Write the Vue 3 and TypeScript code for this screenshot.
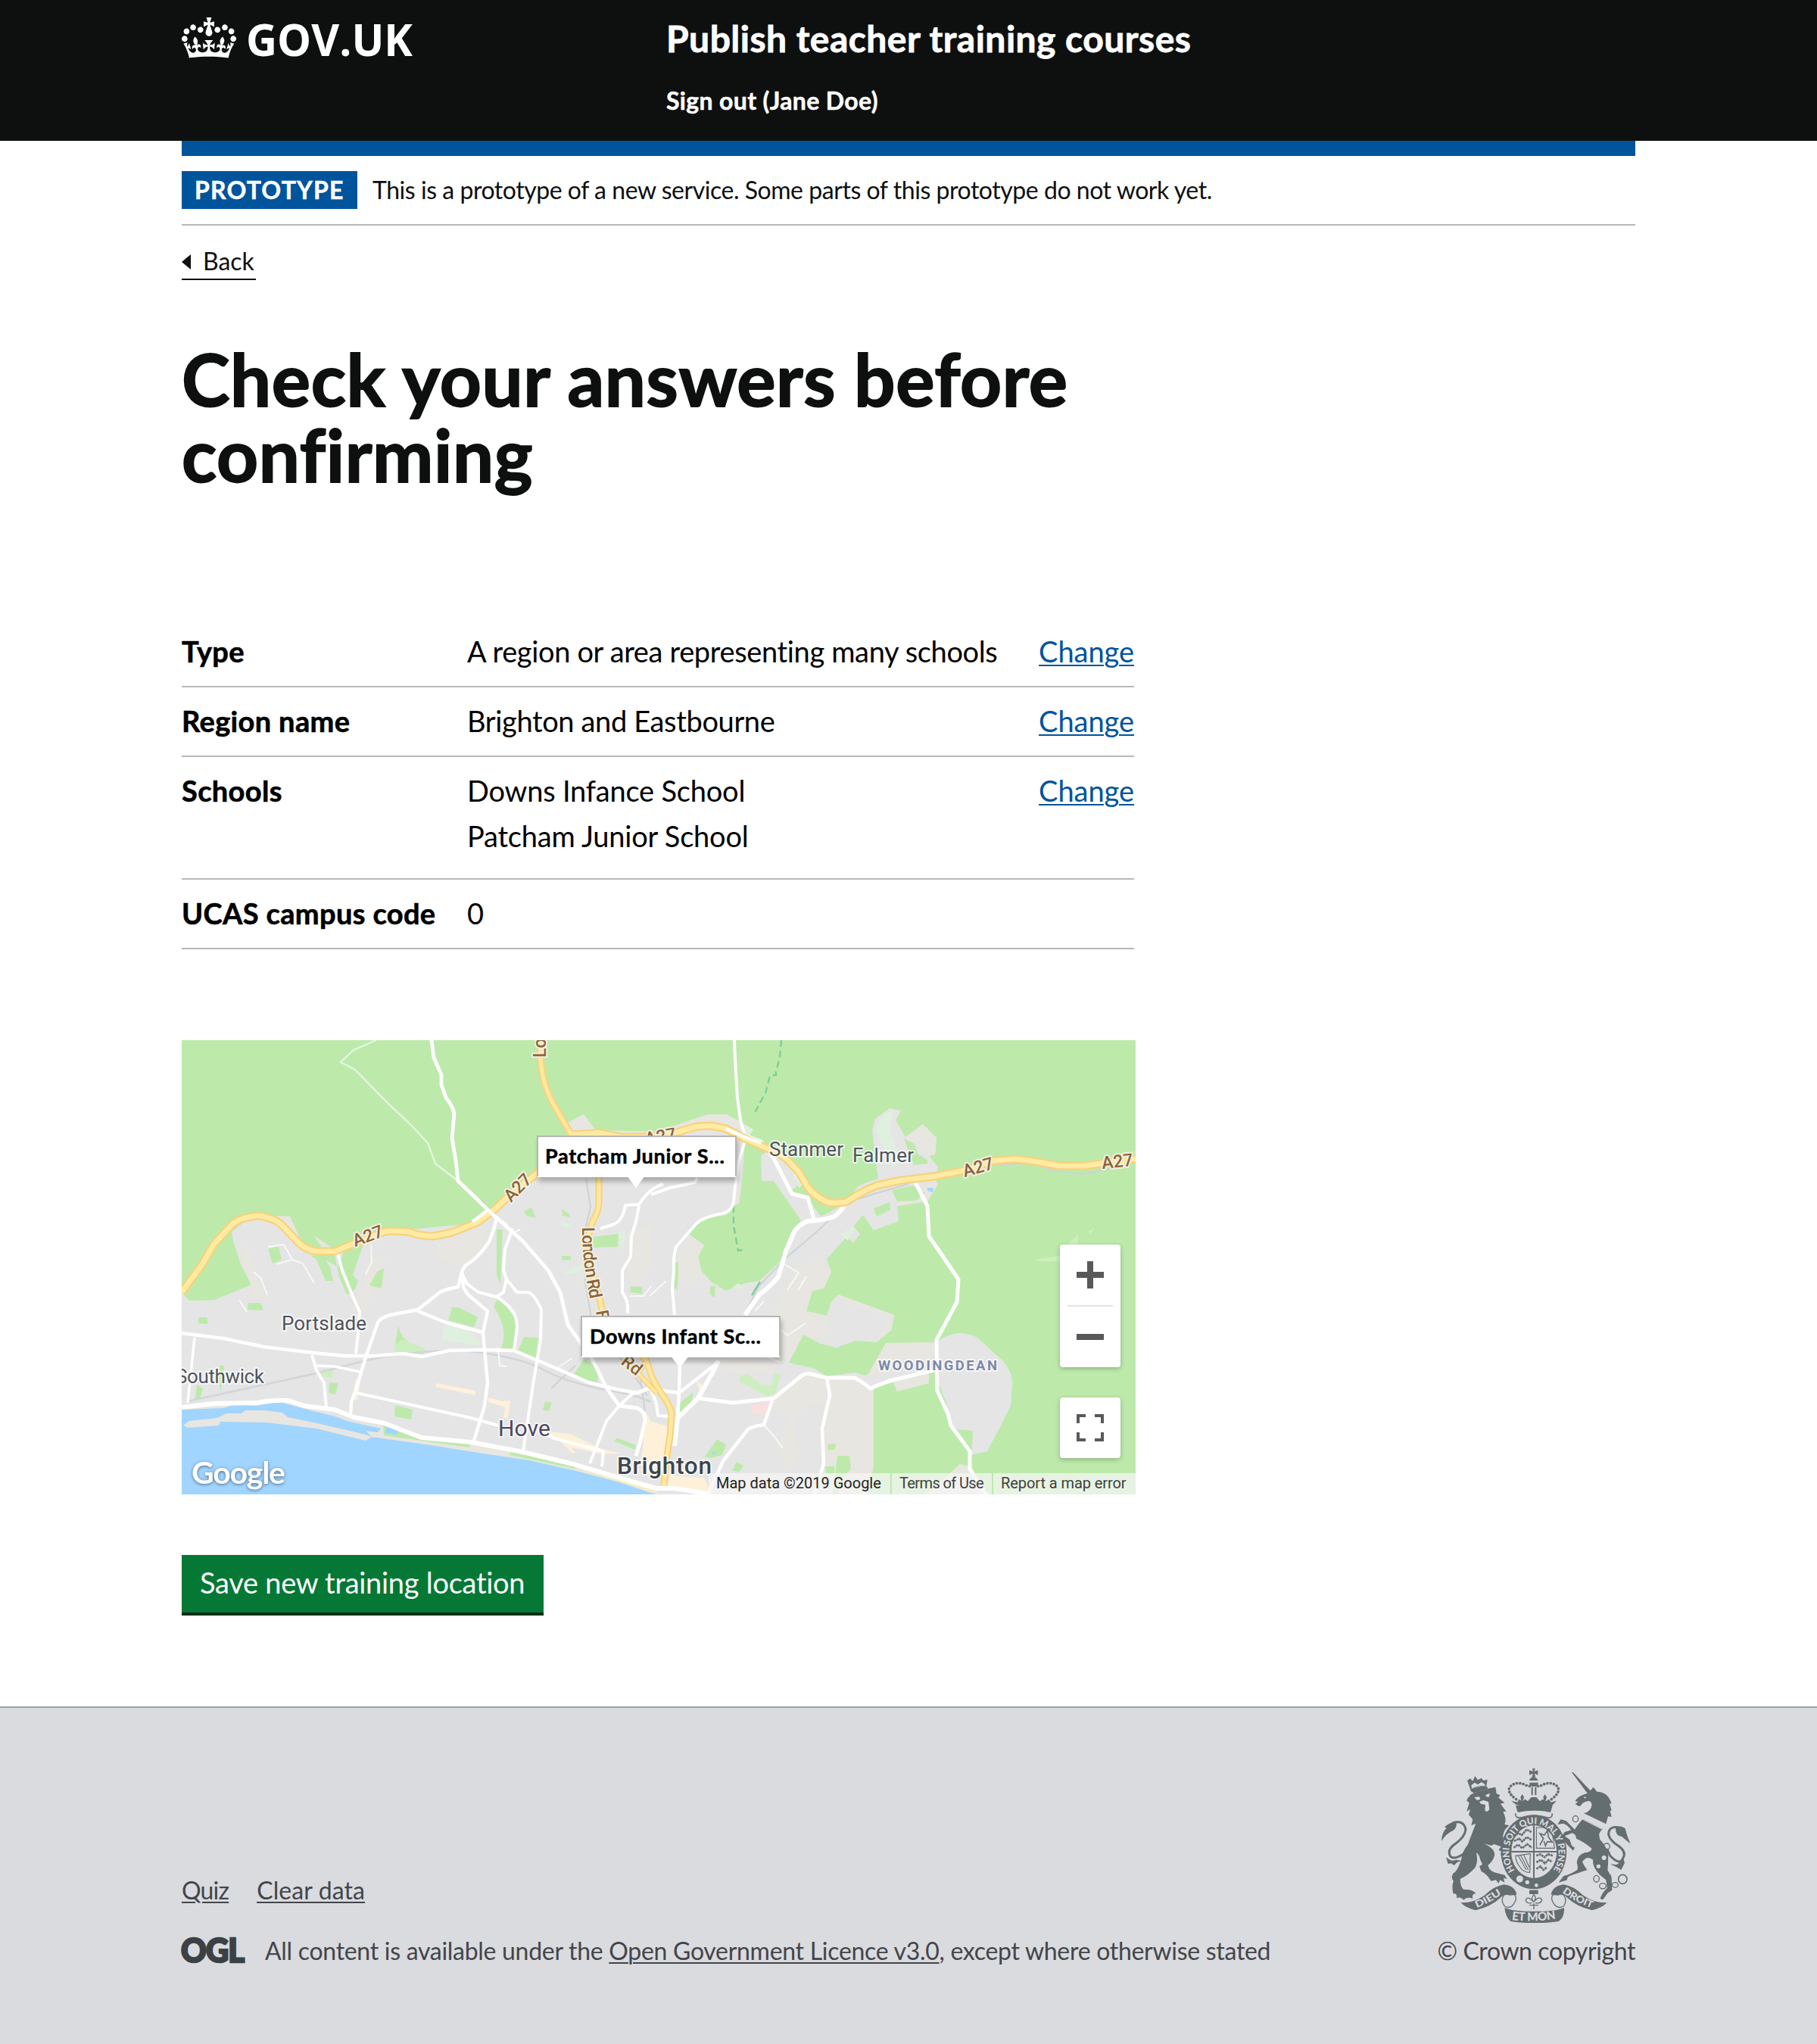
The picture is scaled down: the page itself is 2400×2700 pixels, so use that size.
<script setup lang="ts">
interface SummaryRow {
  key: string
  values: string[]
  change: boolean
}

const rows: SummaryRow[] = [
  { key: 'Type', values: ['A region or area representing many schools'], change: true },
  { key: 'Region name', values: ['Brighton and Eastbourne'], change: true },
  { key: 'Schools', values: ['Downs Infance School', 'Patcham Junior School'], change: true },
  { key: 'UCAS campus code', values: ['0'], change: false },
]

const motorway =
  'M0 333 27 296 43 269 67 243Q78 235 88 234 102 230 112 234 122 236 131 243L153 266Q163 277 178 279L202 279 227 269 255 258Q268 251 280 252L300 253Q315 259 333 259L357 254 390 241 414 223 439 199 467 178Q490 150 520 131L549 122 580 128 620 128 653 122 680 114 700 113 719 117 744 130 773 143Q790 150 798 156L815 174 827 194Q834 204 844 209 852 215 862 215L877 214 893 204Q905 197 918 192L951 185 993 180 1030 173 1055 166Q1066 160 1076 159L1101 157 1126 160 1159 166 1192 166 1221 162 1260 157'
const londonRoad =
  'M473 0 474 26Q476 45 480 59 486 77 496 93L514 124 549 122 551 183 551 216Q550 228 543 239L537 259 541 303 553 345 560 380 600 410 614 423 621 445 628 458 641 478Q647 488 647 496L645 523 641 549 637 588'

const roads: [string, number][] = [
  ['M0 387 55 394 108 405 174 413 214 417 255 417 292 414 317 418 353 410 398 409 439 410 496 434 537 452 574 461 602 466 619 459', 4.6],
  ['M17 393 8 479', 3.5],
  ['M172 416 178 436 188 453 191 486', 4],
  ['M178 430 202 431 235 438', 3.6],
  ['M206 281 212 304 225 336 235 359 233 388 230 414', 4],
  ['M223 496 224 478 231 459 243 419 259 373Q263 366 276 363L312 356 341 333Q352 328 365 326L370 306Q374 296 382 293 396 282 406 266 414 248 416 233', 4.4],
  ['M437 249 427 276 425 304 429 316 425 333 416 339', 4],
  ['M370 308 377 322 392 333 416 339Q430 348 437 358 443 366 443 380L439 409', 4],
  ['M429 316Q434 322 443 333L458 333Q467 337 475 356L474 396 465 449 455 516 451 543', 4],
  ['M330 0 333 23 343 46 343 59 349 76Q358 87 360 97L357 129 362 159 365 186 414 233 451 266 484 304 500 333 510 376 541 419 561 459 578 483 602 486Q612 491 612 502L606 529 600 549', 4.8],
  ['M370 306 372 326 378 336 404 358 398 386 404 453 400 483 386 529', 4.4],
  ['M312 358 349 373 398 386', 4.4],
  ['M231 466 300 481 382 499 418 509', 4],
  ['M474 516 492 526 557 543 555 563', 4],
  ['M578 483 561 503 551 529 539 559', 4],
  ['M578 483 594 468 619 459 627 480 629 496 647 497', 4],
  ['M0 485 43 480 100 479Q122 475 141 476L162 483 202 488 227 498 268 506 288 514 317 525 382 531 451 544 521 561 578 578 627 592 650 592 700 600', 6],
  ['M730 0 731 25 734 76 738 106 744 126', 4],
  ['M744 133 736 159 731 193 729 213Q727 226 715 229 690 233 680 242L653 273Q649 285 650 304L648 329 651 363', 4],
  ['M620 204 645 195 678 188 681 182', 4],
  ['M636 190Q617 196 604 217L586 218Q583 238 571 243L553 249', 4],
  ['M604 219 600 240 594 259 593 286 582 304 582 333Q591 345 589 361', 4],
  ['M719 116 744 126 765 134 782 156 806 203 827 208 835 236', 5],
  ['M877 216Q868 230 860 234 845 238 827 239 815 244 809 253L798 279 788 313Q776 327 763 336L744 363', 6],
  ['M709 423 703 436 682 473 655 499 651 536', 6],
  ['M709 425 657 466Q638 464 620 459', 4.5],
  ['M658 425 657 466 655 499', 4.5],
  ['M968 186 985 219 987 259 1018 304 1026 316 1024 346 997 396 998 463 1012 493 1016 509 1041 543 1041 566 1065 604', 5],
  ['M682 473 728 479 782 473 819 443Q826 439 831 441L852 446 889 446Q900 452 910 460 920 455 939 449L993 436', 5],
  ['M852 446 856 469 846 513 848 559 836 600', 4.5],
  ['M780 476 769 508Q754 510 748 514L715 556 695 600', 4.5],
]
const lanes =
  'M114 273 135 270 146 290 125 296M146 290 160 295 175 321M95 306 105 315 113 337M76 343 86 359M250 270 251 293 243 309M769 508 783 524 794 539M618 338 640 318M790 425 770 417M796 296 815 307 800 330M825 312 814 331M792 383 800 390 824 374M769 345 757 358M418 405 420 430 430 431M497 432 516 420M592 338 610 338 620 325M437 255 447 250'

const urban =
  'M66 253 88 236 120 232 143 233 156 262 174 280 190 318 200 318 196 300 188 288 202 279 255 258 300 250 390 242 382 238 414 222 440 200 472 180 500 150 512 124 510 109 531 98 547 119 630 121 657 111 695 98 719 98 740 109 755 118 748 129 744 133 740 186 736 216 728 219 719 228 682 239 670 256 690 271 682 286 686 304 699 319 719 331 744 321 763 318 786 297 802 280 806 255 818 238 782 186 766 186 765 153 777 143 798 156 819 186 806 199 827 209 844 233 877 216 893 193 910 186 920 183 912 119 916 104 935 90 950 93 943 106 956 128 979 111 997 129 995 151 987 153 999 168 993 193 985 213 945 219 947 239 914 251 900 231 887 246 896 256 887 268 879 259 852 289 858 306 848 328 833 331 825 358 852 364 858 346 867 336 941 363 937 383 918 399 890 397 865 406 844 401 821 389 802 426 836 434 852 444 889 439 902 443 997 399Q1012 388 1026 387 1042 388 1051 393L1084 423Q1098 440 1097 453L1095 483 1080 513 1064 543 1043 548 1045 516 1018 514 1010 479 1001 456 997 439 987 439 987 453 945 464 939 449 914 459 914 563 906 600 0 600 0 333 10 344 43 343 92 323 78 296 71 280Z'
</script>

<template>
  <div class="page">
    <header class="header">
      <div class="container header-row">
        <a class="logo">
          <svg class="crown" viewBox="0 0 132 97" preserveAspectRatio="none">
            <path fill="#fff" fill-rule="evenodd" d="M25 30.2c3.5 1.5 7.7-.2 9.1-3.7 1.5-3.6-.2-7.8-3.9-9.2-3.6-1.4-7.6.3-9.1 3.9-1.4 3.5.3 7.5 3.9 9zM9 39.5c3.6 1.5 7.8-.2 9.2-3.7 1.5-3.6-.2-7.8-3.9-9.1-3.6-1.5-7.6.2-9.1 3.8-1.4 3.5.3 7.5 3.8 9zM4.4 57.2c3.5 1.5 7.7-.2 9.1-3.8 1.5-3.6-.2-7.7-3.9-9.1-3.5-1.5-7.6.3-9.1 3.8-1.4 3.5.3 7.6 3.9 9.1zm38.3-21.4c3.5 1.5 7.7-.2 9.1-3.8 1.5-3.6-.2-7.7-3.9-9.1-3.6-1.5-7.6.3-9.1 3.8-1.3 3.6.4 7.7 3.9 9.1zm64.4-5.6c-3.6 1.5-7.8-.2-9.1-3.7-1.5-3.6.2-7.8 3.8-9.2 3.6-1.4 7.7.3 9.2 3.9 1.3 3.5-.4 7.5-3.9 9zm15.9 9.3c-3.6 1.5-7.7-.2-9.1-3.7-1.5-3.6.2-7.8 3.7-9.1 3.6-1.5 7.7.2 9.2 3.8 1.5 3.5-.3 7.5-3.8 9zm4.7 17.7c-3.6 1.5-7.8-.2-9.2-3.8-1.5-3.6.2-7.7 3.9-9.1 3.6-1.5 7.7.3 9.2 3.8 1.3 3.5-.4 7.6-3.9 9.1zM89.3 35.8c-3.6 1.5-7.8-.2-9.2-3.8-1.4-3.6.2-7.7 3.9-9.1 3.6-1.5 7.7.3 9.2 3.8 1.4 3.6-.3 7.7-3.9 9.1zM69.7 17.7l8.9 4.7V9.3l-8.9 2.8c-.2-.3-.5-.6-.9-.9L72.4 0H59.6l3.5 11.2c-.3.3-.6.5-.9.9l-8.8-2.8v13.1l8.8-4.7c.3.3.6.7.9.9l-5 15.4v.1c-.2.8-.4 1.6-.4 2.4 0 4.1 3.1 7.5 7 8.1h.2c.3 0 .7.1 1 .1.4 0 .7 0 1-.1h.2c4-.6 7.1-4.1 7.1-8.1 0-.8-.1-1.7-.4-2.4V34l-5.1-15.4c.4-.2.7-.6 1-.9zM66 92.8c16.9 0 32.8 1.1 47.1 3.2 4-16.9 8.9-26.7 14-33.5l-9.6-3.4c1 4.9 1.1 7.2 0 10.2-1.5-1.4-3-4.3-4.2-8.7L108.6 76c2.8-2 5-3.2 7.5-3.3-4.4 9.4-10 11.9-13.6 11.2-4.3-.8-6.3-4.6-5.6-7.9 1-4.7 5.7-5.9 8-.5 4.3-8.7-3-11.4-7.6-8.8 7.1-7.2 7.9-13.5 2.1-21.1-8 6.1-8.1 12.3-4.5 20.8-4.7-5.4-12.1-2.5-9.5 6.2 3.4-5.2 7.9-2 7.2 3.1-.6 4.3-6.4 7.8-13.5 7.2-10.3-.9-10.9-8-11.2-13.8 2.5-.5 7.1 1.8 11 7.3L80.2 60c-4.1 4.4-8 5.3-12.3 5.4 1.4-4.4 8-11.6 8-11.6H55.5s6.4 7.2 7.9 11.6c-4.2-.1-8-1-12.3-5.4l1.4 16.4c3.9-5.5 8.5-7.7 10.9-7.3-.3 5.8-.9 12.8-11.1 13.8-7.2.6-12.9-2.9-13.5-7.2-.7-5 3.8-8.3 7.1-3.1 2.7-8.7-4.6-11.6-9.4-6.2 3.7-8.5 3.6-14.7-4.6-20.8-5.8 7.6-5 13.9 2.2 21.1-4.7-2.6-11.9.1-7.7 8.8 2.3-5.5 7.1-4.2 8.1.5.7 3.3-1.3 7.1-5.7 7.9-3.5.7-9-1.8-13.5-11.2 2.5.1 4.7 1.3 7.5 3.3l-4.7-15.4c-1.2 4.4-2.7 7.2-4.3 8.7-1.1-3-.9-5.3 0-10.2l-9.5 3.4c5 6.9 9.9 16.7 14 33.5 14.8-2.1 30.8-3.2 47.7-3.2z" />
          </svg>
          <svg class="wordmark" viewBox="0 0 230 84">
            <text x="0" y="51" font-size="59" textLength="220" lengthAdjust="spacingAndGlyphs">GOV.UK</text>
          </svg>
        </a>
        <div class="header-content">
          <a class="service">Publish teacher training courses</a>
          <a class="sign-out">Sign out (Jane Doe)</a>
        </div>
      </div>
    </header>

    <div class="container">
      <div class="blue-bar"></div>
      <div class="phase">
        <strong class="tag">PROTOTYPE</strong>
        <span class="phase-text">This is a prototype of a new service. Some parts of this prototype do not work yet.</span>
      </div>
      <a class="back">
        <svg width="12" height="20" viewBox="0 0 12 20"><path d="M0 10 12 0V20Z" fill="#0e100f" /></svg>
        <span>Back</span>
      </a>

      <main class="main">
        <h1>Check your answers before confirming</h1>

        <dl class="summary">
          <div v-for="row in rows" :key="row.key" class="row">
            <dt>{{ row.key }}</dt>
            <dd class="value">
              <p v-for="v in row.values" :key="v">{{ v }}</p>
            </dd>
            <dd v-if="row.change" class="action"><a>Change</a></dd>
          </div>
        </dl>

        <div class="map">
          <svg class="map-canvas" viewBox="0 0 1260 600">
            <defs>
              <path id="ldn" d="M529 247Q529 300 544 362" />
            </defs>
            <rect width="1260" height="600" fill="#bdeaab" />
            <path :d="urban" fill="#e5e5e5" />
            <g fill="#e8e6e0">
              <path d="M120 232 143 233 156 262 150 262 135 240ZM174 258 200 275 190 280ZM510 109 531 98 547 119 520 128ZM547 119 630 121 650 124 600 128ZM657 111 695 98 719 98 740 109 755 118 746 126 720 112 695 108 655 120ZM740 160 739 186 736 216 727 216 730 180ZM979 111 997 129 995 151 987 153 975 140 956 128ZM993 180 999 190 985 213 945 219 947 213 975 206ZM670 256 690 271 682 286 690 318 660 320 655 290ZM858 306 848 328 833 331 825 358 852 364 860 385 844 395 821 389 802 426 790 424 770 380 790 340 810 300 840 290ZM867 336 941 363 937 383 918 399 935 365 880 350ZM850 450 889 446 914 459 914 563 906 600 836 600 850 560 848 513 858 469ZM790 460 831 441 850 450 850 480 830 480 810 500 815 550 800 570 790 530 800 500 775 480ZM939 449 987 439 987 453 945 464ZM382 240 414 224 405 240ZM350 265 400 250 395 285 365 300 330 280ZM85 265 100 320 115 345 95 340 75 300ZM250 290 270 285 250 330 245 360 228 350 240 320ZM700 420 790 425 780 440 720 440ZM930 400 997 399 985 420 940 430 905 444ZM590 250 620 245 620 300 595 330 590 300Z" />
              <path d="M1018 569 1028 560 1042 563 1065 604 978 604Z" />
            </g>
            <g fill="#bdeaab">
              <path d="M0 333 10 344 43 343 92 323 78 296 64 253 40 270ZM170 285 202 281 207 310 218 336 228 331 233 318 226 310 240 270 215 276 206 300 190 290 200 318 190 318 178 290ZM114 276 128 272 132 290 120 295ZM88 347 104 347 108 357 87 356ZM22 366 34 366 34 375 22 374ZM258 306 267 301 264 328 248 324ZM452 226 462 221 468 235 456 232ZM502 223 512 230 513 234 503 232ZM541 260 577 256 576 273 542 274ZM502 285 514 285 514 291 502 290ZM416 250 424 250 421 323 416 310ZM357 353 366 353 391 366 386 379 352 370ZM417 342Q443 360 444 385L437 408 422 407Q432 380 412 352ZM286 376Q290 395 302 400L321 408 321 414 290 410 281 412ZM452 392 471 393 468 420 444 411ZM532 421 551 434 549 453 516 444ZM195 452 207 453 203 468 194 466ZM282 482 305 488 303 501 281 497ZM480 477 489 479 485 490 477 488ZM574 525 600 535 599 541 572 530ZM593 325 608 326 608 335 592 333ZM654 482 676 465 672 484 655 497ZM707 527 719 534 714 548 700 552 691 550ZM733 557 742 562 736 571 727 568ZM853 534 864 533 863 541 853 541ZM866 549 882 549 884 566 872 580 866 600 860 600ZM850 563 862 563 862 572 851 572ZM954 130 968 137 972 150 985 158 985 163 967 165ZM938 198 965 192 982 202 970 212 945 213ZM914 222 935 214 936 224 918 233ZM698 325 705 325 704 340 698 336ZM650 295 656 293 655 330 650 325ZM50 430 56 430 52 462 50 460ZM20 455 28 460 24 474 18 474ZM1018 514 1045 516 1043 546Z" />
            </g>
            <g fill="#cdefbf">
              <path d="M738 443 748 441 765 455 780 456 782 440 791 441 784 467 772 470 736 450ZM185 435 200 434 199 446 185 444ZM281 405 290 395 320 408 322 415 281 413Z" />
              <path fill="#dff0df" d="M346 377 370 377 395 398 394 404 344 396ZM333 264 342 270 339 274ZM502 240 517 243 514 248 502 246ZM500 308 530 296 530 304 510 310ZM577 254 586 252 583 278 578 270ZM916 120 925 100 940 92 935 120 950 160 940 168ZM727 327 735 321 743 328ZM798 152 812 180 822 190 815 195ZM740 110 755 118 748 129ZM869 256 890 246 880 265Z" />
              <path d="M1126 290 1160 285 1170 270 1184 257 1184 270 1165 292 1135 292ZM1198 252 1206 248 1200 257Z" />
            </g>
            <g fill="#fef0d9">
              <path d="M336 453 388 463 388 469 336 458ZM405 472 424 477 434 476 431 499 425 499 427 485 405 478ZM230 447 236 450 232 475 225 475ZM480 517 513 520 555 540 582 546 555 547 515 538 520 545 516 546 500 530ZM610 486 618 500 618 503 643 510 640 560 624 580 606 560 610 530ZM645 575 690 578 700 598 640 592ZM680 450 688 456 690 470 684 464Z" />
              <path fill="#f9dfdd" d="M755 480 778 478 772 496 752 492Z" />
            </g>
            <path fill="#e8e6e0" d="M0 512 0 600 627 600 600 580 500 552 451 545 382 533 310 525 280 515 218 503 160 486 133 481 100 481 45 482 0 487Z" />
            <path fill="#bdeaab" d="M266 508 290 518 320 527 381 533 380 538 267 522ZM434 544 521 562 519 566 433 548Z" />
            <path fill="#f9efc0" d="M528 562 627 592 629 598 600 590 530 568Z" />
            <g fill="#a0d5ff">
              <path d="M0 488 55 486 72 481 97 483 129 478 170 489 203 497 218 503 263 513 259 518 243 516 251 524 243 521 205 512 165 503 140 498 133 492 110 489 84 489 79 493 59 493 47 499 10 503 2 509 8 512 49 509 51 504 112 505 178 513 243 529 251 524 329 535 398 546 459 555 521 569 578 584 619 598 627 600 0 600Z" />
              <path d="M270 510 286 514 285 521 269 519ZM984 195 993 195 992 201 986 199ZM700 544 705 543 703 548Z" />
            </g>
            <path d="M8 477 178 440 235 425Q300 410 360 410 420 412 470 431 500 450 560 462 600 468 620 478" fill="none" stroke="#d2d5d9" stroke-width="2.6" />
            <path d="M534 183 540 220 533 250 533 320 545 390 590 430 615 470M488 460 520 430M800 286 840 252 880 214 918 202 960 190M745 360 762 325 800 286M1076 165 1120 162 1150 172 1190 177 1225 170M585 425 605 440 612 490" fill="none" stroke="#cfd1d8" stroke-width="2" />
            <path d="M753 337 764 319" stroke="#82cf9b" stroke-width="2.4" fill="none" />
            <path d="M792 0 790 22 785 42 785 46 777 47 771 70 763 84 756 98M729 219 729 245 735 278 742 277" fill="none" stroke="#7fcf95" stroke-width="2.4" stroke-dasharray="9 5" />
            <path d="M395 212 405 222" stroke="#7fcf95" stroke-width="2.4" />
            <path d="M257 0 227 13 210 29 229 39 272 83 304 113 325 136 335 163 365 186" fill="none" stroke="#e3f6da" stroke-width="2.4" />
            <path :d="lanes" fill="none" stroke="#f7f9f4" stroke-width="2" />
            <path v-for="(r, i) in roads" :key="i" :d="r[0]" fill="none" stroke="#fff" :stroke-width="r[1]" stroke-linejoin="round" />
            <g fill="none" stroke-linejoin="round">
              <path :d="londonRoad" stroke="#f8d27c" stroke-width="9" />
              <path d="M614 423 603 440 627 466" stroke="#f8d27c" stroke-width="7" />
              <path :d="motorway" stroke="#f8d27c" stroke-width="11" />
              <path :d="londonRoad" stroke="#ffe9a0" stroke-width="5" />
              <path d="M614 423 603 440 627 466" stroke="#ffe9a0" stroke-width="3.4" />
              <path :d="motorway" stroke="#ffeba3" stroke-width="6.6" />
            </g>
            <path d="M365 186 414 233 430 245M719 117 744 128 765 136M384 240 405 224" stroke="#fff" stroke-width="4.4" fill="none" />

            <g class="place">
              <text x="776" y="153" font-size="26" textLength="98">Stanmer</text>
              <text x="886" y="161" font-size="26" textLength="81">Falmer</text>
              <text x="132" y="383" font-size="26" textLength="112">Portslade</text>
              <text x="-8" y="453" font-size="26" textLength="117">Southwick</text>
              <text x="418" y="523" font-size="30" textLength="69" class="hove">Hove</text>
              <text x="575" y="573" font-size="31.5" textLength="125" class="city">Brighton</text>
              <text x="920" y="436" font-size="18.5" textLength="157" class="suburb">WOODINGDEAN</text>
            </g>
            <g class="road-name">
              <text transform="translate(229 273) rotate(-20)">A27</text>
              <text transform="translate(435 215) rotate(-46)">A27</text>
              <text transform="translate(613 138) rotate(-9)">A27</text>
              <text transform="translate(1034 181) rotate(-16)">A27</text>
              <text transform="translate(1216 170) rotate(-6)">A27</text>
              <text transform="translate(481 23) rotate(-90)">Lo</text>
              <text transform="translate(547 358) rotate(80)">F</text>
              <text transform="translate(579 427) rotate(38)">Rd</text>
              <text><textPath href="#ldn" textLength="96">London Rd</textPath></text>
            </g>
            <text x="13" y="586" class="google" textLength="124">Google</text>
          </svg>

          <div class="pin pin-patcham">Patcham Junior S...</div>
          <div class="pin pin-downs">Downs Infant Sc...</div>

          <div class="zoom">
            <svg width="80" height="80" viewBox="0 0 80 80"><path d="M22 36H36V22H44V36H58V44H44V58H36V44H22Z" fill="#595959" /></svg>
            <i></i>
            <svg width="80" height="80" viewBox="0 0 80 80"><path d="M22 36H58V44H22Z" fill="#595959" /></svg>
          </div>
          <div class="fullscreen">
            <svg width="80" height="80" viewBox="0 0 80 80" fill="none" stroke="#595959" stroke-width="4"><path d="M24 34V24H34M46 24H56V34M56 46V56H46M34 56H24V46" /></svg>
          </div>
          <div class="attribution">
            <span class="data">Map data ©2019 Google</span>
            <span class="terms">Terms of Use</span>
            <span class="report">Report a map error</span>
          </div>
        </div>

        <button class="button">Save new training location</button>
      </main>
    </div>

    <footer class="footer">
      <div class="container footer-row">
        <div class="footer-meta">
          <nav><a class="quiz">Quiz</a><a>Clear data</a></nav>
          <div class="licence">
            <svg class="ogl" viewBox="0 0 82 36"><text x="-1" y="33" font-size="44" textLength="83" lengthAdjust="spacingAndGlyphs">OGL</text></svg>
            <span>All content is available under the <a>Open Government Licence v3.0</a>, except where otherwise stated</span>
          </div>
        </div>
        <div class="copyright">
          <svg class="crest" viewBox="72 78 750 612" preserveAspectRatio="none">
            <defs>
              <path id="garter" d="M365 485A98 112 0 1 1 511 485" />
              <path id="left-scroll" d="M210 631Q262 612 322 568" />
              <path id="mid-scroll" d="M346 677Q440 690 534 672" />
              <path id="right-scroll" d="M549 568Q600 608 680 636" />
            </defs>
            <g fill="#646d70">
              <!-- lion -->
              <path d="M186 166Q215 148 252 149L256 158 200 176ZM174 126 186 118 196 128 205 108 216 124 230 116 238 126 254 122 250 148Q215 148 188 166Z" />
              <path d="M176 196 190 180Q240 160 286 152L290 178 304 184 298 194 322 214 306 218 328 248 316 250Q332 280 322 300L340 304Q308 330 318 362 345 376 350 396L345 430 335 440 330 428 318 436 320 418 306 422 310 406 298 402 308 388 280 378 270 384 240 376Q286 396 282 424 276 446 256 462 262 486 290 492L322 500 332 516 318 512 322 530 304 520 298 534 288 520 268 524Q252 496 230 486L222 466 234 458 226 440Q222 420 210 412 218 446 206 470 180 500 146 516 146 546 160 558 196 556 208 574 190 574 196 594 172 584 160 600 148 584 132 592 136 572 118 574 112 540 120 524 108 512 118 494Q134 488 150 440 154 406 176 380L208 296 190 304 196 280 180 262 186 240 172 248 182 214 172 206Z" />
              <path d="M72 366Q74 330 92 314L84 310Q110 288 130 290 136 310 118 324 90 336 72 366Z" />
              <path d="M90 430 106 440Q112 446 130 440L152 444 134 450 122 462 110 454 98 456Z" />
              <!-- unicorn -->
              <path d="M588 94 594 94 662 166 674 152 688 170Q730 170 746 216L738 218 746 244 740 246 746 270 732 268 724 298 636 256Q664 250 668 222 664 204 650 208 630 212 622 228L612 226 602 218 614 210 602 208Q610 190 634 182L650 176Z" />
              <path d="M634 276 712 318Q690 330 700 360 720 380 732 410 734 450 730 480L746 510 748 560 730 572 712 598 700 594 712 570 728 552 724 520 700 500Q670 470 672 440 650 420 630 448 640 470 650 480L590 500Q566 506 570 520L536 530 556 504Q580 500 610 480 614 470 608 450 612 420 640 412 664 410 668 396 640 370 606 356 606 340 590 334L560 346 580 360 588 384 600 392 594 404 570 380 548 348 560 330 586 322 572 306 556 296 532 300 544 280 566 286 600 320Q612 300 634 276Z" />
              <path d="M820 376 786 348Q760 344 762 314 780 300 800 316 806 344 820 376Z" />
              <path d="M740 456 764 460Q780 454 790 430L798 452 784 480 768 470Z" />
              <path d="M724 494 744 500 742 540 730 530Z" />
              <!-- garter ring and royal crown -->
              <path fill-rule="evenodd" d="M438 262A130 147 0 1 1 437 262ZM438 304A90 104 0 1 0 439 304Z" />
              <path d="M366 226Q438 206 512 226L504 252Q438 238 374 252ZM368 222 348 206 372 212 380 200 392 208 404 200 414 208 428 192H448L462 208 474 200 486 208 498 200 506 212 528 206 510 226Z" />
              <path d="M432 78H443L440 90 454 85V104L440 98 445 112H430L435 98 420 104V85L435 90ZM420 126Q422 114 436 112 452 114 454 126ZM420 134H456Q454 150 438 150 422 150 420 134ZM428 152H434V184H428ZM442 152H448V184H442Z" />
              <path d="M392 180 399 192 395 206H389L385 192ZM482 180 489 192 485 206H479L475 192Z" />
              <path d="M404 200 412 210 424 204 418 222H404ZM472 200 464 210 452 204 458 222H472Z" />
              <!-- motto scroll -->
              <path d="M148 610Q200 612 244 580 280 544 320 538 364 544 370 578L340 580Q320 576 306 590 270 624 208 640 170 632 148 610Z" />
              <path d="M728 610Q676 612 632 580 596 544 556 538 512 544 506 578L536 580Q556 576 570 590 606 624 668 640 706 632 728 610Z" />
              <path d="M322 630Q350 642 400 644H480Q530 642 558 630 560 668 536 684 440 698 346 684 326 668 322 630Z" />
              <path d="M420 560H455V576H420Z" />
            </g>
            <g fill="none" stroke="#646d70">
              <path d="M116 294Q160 280 168 320 164 350 130 374 96 396 104 420 114 446 160 416L176 392" stroke-width="9" />
              <path d="M776 312Q734 304 734 340 740 364 772 384 806 408 792 432 780 466 740 424L728 396" stroke-width="9" />
              <path d="M368 200Q326 170 346 148 372 126 410 146L430 150M508 200Q548 170 530 148 504 126 466 146L446 150" stroke-width="11" stroke-dasharray="0.1 13" stroke-linecap="round" />
              <path d="M366 256Q362 278 392 272 438 258 486 272 514 278 510 256" stroke-width="5" />
              <path d="M320 580Q304 600 322 624 350 640 366 600 372 570 340 580M556 580Q572 600 556 624 526 640 510 600 504 570 536 580" stroke-width="4" />
              <path d="M438 304V512M348 408H530" stroke-width="6" />
              <path d="M448 312H490L512 340 520 394H448ZM366 424 424 416 422 490Q396 490 384 470 366 450 366 424ZM376 424 408 480M386 422 416 480M398 420 420 470" stroke-width="3.4" />
              <path d="M362 346 376 334 390 342 410 320 428 330M360 366 380 356 392 368 410 350 430 362M358 392 376 380 392 394 412 378 430 392M448 424 464 418 480 430 494 418 514 424M448 450 466 440 482 454 496 440 510 448M448 476 464 466 476 480 490 470" stroke-width="8" stroke-dasharray="9 2" />
              <path d="M462 382 476 356 462 336 480 342 492 324 496 350 510 370 492 368 484 384 478 366" stroke-width="5" />
              <path d="M438 578Q424 594 436 606 452 594 438 578ZM436 606Q412 580 406 600 410 616 430 610M438 606Q462 580 470 600 464 616 444 610M420 620H456M438 612V636" stroke-width="4" />
              <ellipse cx="790" cy="517" rx="17" ry="18" stroke-width="5" />
              <ellipse cx="760" cy="540" rx="12" ry="10" stroke-width="4" />
              <ellipse cx="711" cy="544" rx="13" ry="11" stroke-width="4" />
              <ellipse cx="686" cy="515" rx="11" ry="13" stroke-width="4" />
              <ellipse cx="727" cy="387" rx="12" ry="12" stroke-width="4" />
              <ellipse cx="603" cy="278" rx="11" ry="12" stroke-width="4" />
            </g>
            <g fill="#dadbdf">
              <path d="M202 192 222 190 226 200 212 204ZM246 184 264 176 260 192 250 190ZM222 210 238 204 258 210 262 240Q252 256 244 244L246 222 228 218Z" />
              <circle cx="716" cy="432" r="9" /><circle cx="694" cy="466" r="8" /><circle cx="592" cy="362" r="9" /><circle cx="412" cy="529" r="8" /><circle cx="448" cy="541" r="7" />
              <path d="M634 192 646 190 642 198ZM626 256 640 262 650 280 662 272 670 290 684 284 690 300 702 296 706 308 714 306 708 320 628 280Z" opacity=".85" />
              <path d="M190 144 204 134 216 142 230 132 244 140 244 146Q214 146 192 158Z" />
            </g>
            <circle cx="382" cy="516" r="17" fill="#dadbdf" stroke="#646d70" stroke-width="7" />
            <g class="crest-text">
              <text font-size="36"><textPath href="#garter" startOffset="4" textLength="480" lengthAdjust="spacingAndGlyphs">HONI SOIT QUI MAL Y PENSE</textPath></text>
              <text font-size="38"><textPath href="#left-scroll" startOffset="2" textLength="112" lengthAdjust="spacingAndGlyphs">DIEU</textPath></text>
              <text font-size="46"><textPath href="#mid-scroll" startOffset="4" textLength="176" lengthAdjust="spacingAndGlyphs">ET MON</textPath></text>
              <text font-size="38"><textPath href="#right-scroll" startOffset="2" textLength="132" lengthAdjust="spacingAndGlyphs">DROIT</textPath></text>
            </g>
          </svg>
          <span>© Crown copyright</span>
        </div>
      </div>
    </footer>
  </div>
</template>

<style>
body { background: #fff; }
</style>

<style scoped>
.page {
  width: 2400px;
  height: 2700px;
  display: flex;
  flex-direction: column;
  font-family: Lato, "Open Sans", sans-serif;
  color: #0e100f;
  overflow: hidden;
}
.container { width: 1920px; margin: 0 auto; }
p, dl, dd, h1 { margin: 0; }

.header { height: 186px; background: #0e100f; color: #fff; }
.header-row { display: flex; }
.logo { display: flex; width: 640px; height: 110px; }
.crown { width: 72px; height: 54px; margin-top: 23px; }
.wordmark { width: 230px; height: 84px; margin: 23px 0 0 13px; }
.wordmark text { font-family: "Open Sans", sans-serif; font-weight: 700; fill: #fff; }
.header-content { display: flex; flex-direction: column; padding-top: 21px; font-weight: 700; }
.service { font-size: 48px; line-height: 60px; letter-spacing: 0.47px; -webkit-text-stroke: 0.8px; }
.sign-out { margin-top: 32px; font-size: 32px; line-height: 40px; letter-spacing: 0.35px; -webkit-text-stroke: 0.5px; }

.blue-bar { height: 20px; background: #00549c; }
.phase { display: flex; padding: 20px 0; border-bottom: 2px solid #b8b8b8; height: 50px; }
.tag {
  box-sizing: border-box;
  width: 232px;
  height: 50px;
  padding-left: 17px;
  background: #00549c;
  color: #fff;
  font-size: 32px;
  font-weight: 700;
  letter-spacing: 1.2px;
  line-height: 50px;
  -webkit-text-stroke: 0.5px;
}
.phase-text { margin-left: 20px; font-size: 32px; line-height: 50px; letter-spacing: -0.46px; white-space: nowrap; }

.back {
  display: flex;
  width: 98px;
  height: 44px;
  margin-top: 26px;
  border-bottom: 2px solid #0e100f;
  font-size: 32px;
  line-height: 42px;
}
.back svg { margin: 12px 16px 0 0; }

.main { width: 1260px; }
h1 { margin-top: 80px; font-size: 96px; line-height: 100px; font-weight: 700; letter-spacing: 0.6px; -webkit-text-stroke: 1.8px; }

.summary { width: 1258px; margin-top: 166px; font-size: 38px; line-height: 50px; color: #000; }
.row { display: flex; padding: 19px 0 21px; border-bottom: 2px solid #b8b8b8; }
dt { width: 377px; font-weight: 700; letter-spacing: 0.35px; -webkit-text-stroke: 0.6px; }
.value { flex: 1; letter-spacing: -0.36px; }
.value p + p { margin-top: 10px; }
.row:nth-child(3) { padding-bottom: 31px; }
.row:nth-child(3) p { letter-spacing: -0.2px; }
.action a { color: #00549c; text-decoration: underline; text-decoration-thickness: 2px; text-underline-offset: 3px; letter-spacing: -0.05px; }

.map { position: relative; width: 1260px; height: 600px; margin-top: 120px; overflow: hidden; }
.map-canvas { display: block; width: 1260px; height: 600px; font-family: Roboto, sans-serif; }
.place { fill: #4f545b; stroke: #fff; stroke-width: 4px; stroke-opacity: 0.7; paint-order: stroke; stroke-linejoin: round; }
.hove { fill: #50485f; }
.city { fill: #3f454c; font-weight: 500; }
.suburb { fill: #7b89a9; font-weight: 700; }
.road-name { font-size: 23px; font-weight: 500; fill: #8c6338; stroke: #f4f0e0; stroke-width: 4px; paint-order: stroke; stroke-linejoin: round; }
.google { font-family: Lato, sans-serif; font-size: 41px; font-weight: 700; fill: #fff; filter: drop-shadow(0 1px 2px rgba(60, 80, 110, 0.8)); }

.pin {
  position: absolute;
  box-sizing: border-box;
  width: 264px;
  height: 55px;
  border: 2px solid #b6b6b6;
  border-bottom-color: #fff;
  background: #fff;
  box-shadow: 2px 6px 6px rgba(0, 0, 0, 0.25);
  color: #000;
  font-size: 27px;
  font-weight: 700;
  line-height: 50px;
  white-space: nowrap;
  -webkit-text-stroke: 0.5px;
}
.pin::after {
  content: "";
  position: absolute;
  left: 117px;
  top: 51px;
  border: 12px solid transparent;
  border-top: 16px solid #fff;
  border-bottom: 0;
}
.pin-patcham { left: 469px; top: 126px; padding-left: 9px; letter-spacing: 0.7px; }
.pin-downs { left: 527px; top: 364px; padding-left: 10px; letter-spacing: 0.6px; }

.zoom, .fullscreen {
  position: absolute;
  left: 1160px;
  width: 80px;
  border-radius: 4px;
  background: #fff;
  box-shadow: 0 2px 6px rgba(0, 0, 0, 0.25);
}
.zoom { top: 270px; height: 162px; display: flex; flex-direction: column; }
.zoom i { width: 60px; height: 2px; margin: 0 10px; background: #e4e4e4; }
.fullscreen { top: 472px; height: 80px; }
.attribution {
  position: absolute;
  right: 0;
  bottom: 0;
  display: flex;
  height: 28px;
  font-family: Roboto, sans-serif;
  font-size: 20px;
  line-height: 27px;
  color: #404040;
}
.attribution span { box-sizing: border-box; background: rgba(245, 245, 245, 0.74); padding-left: 10px; white-space: nowrap; }
.data { width: 240px; color: #222; }
.terms { width: 132px; margin-left: 2px; letter-spacing: -0.62px; }
.report { width: 188px; margin-left: 2px; letter-spacing: -0.08px; }

.button {
  display: block;
  width: 478px;
  height: 76px;
  margin: 80px 0 0;
  padding: 0 0 4px 24px;
  border: 0;
  background: #057835;
  box-shadow: 0 4px 0 #022c18;
  color: #fff;
  font: 400 38px/72px Lato, sans-serif;
  letter-spacing: -0.28px;
  text-align: left;
}

.footer { flex: 1; margin-top: 124px; border-top: 2px solid #98a1a6; background: #dadbdf; color: #434549; font-size: 32px; line-height: 40px; }
.footer-row { display: flex; justify-content: space-between; padding-top: 80px; }
.footer-meta { padding-top: 141px; }
.footer a { text-decoration: underline; text-decoration-thickness: 2px; text-underline-offset: 3px; }
nav { display: flex; gap: 37px; letter-spacing: 0.1px; }
.quiz { letter-spacing: -0.8px; }
.licence { display: flex; margin-top: 40px; letter-spacing: -0.29px; white-space: nowrap; }
.ogl { width: 82px; height: 36px; margin: 2px 28px 0 0; overflow: visible; }
.ogl text { font-family: Lato, sans-serif; font-weight: 900; fill: #3c4144; stroke: #3c4144; stroke-width: 2.5px; letter-spacing: -1px; }
.copyright { display: flex; flex-direction: column; align-items: flex-end; width: 262px; letter-spacing: -0.4px; }
.crest { width: 250px; height: 204px; margin: 0 6px 17px 0; }
.crest-text { font-family: Lato, sans-serif; font-weight: 900; fill: #dadbdf; }
</style>
